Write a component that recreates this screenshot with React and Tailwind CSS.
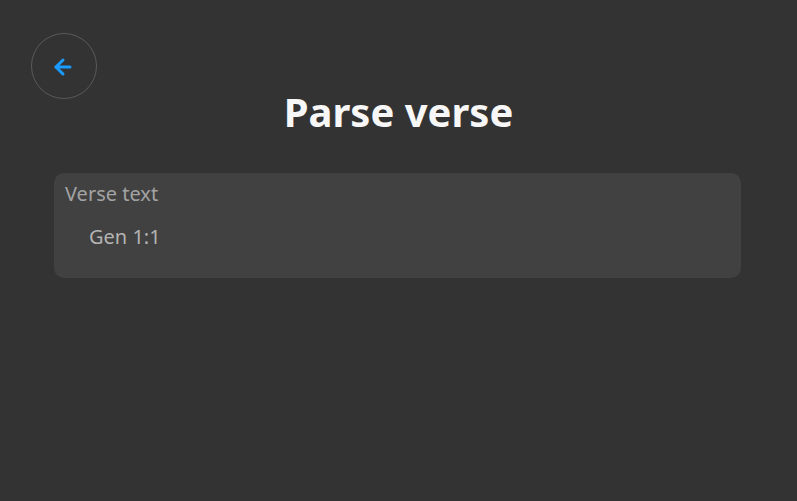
import { ArrowLeft } from "lucide-react"

export default function App() {
  return (
    <div className="w-[797px] h-[501px] bg-[#333333] font-['Noto_Sans',sans-serif] relative">
      <div className="px-[31px] pt-[33px]">
        <button className="w-[66px] h-[66px] rounded-full border border-[#5a5a5a] flex items-center justify-center">
          <ArrowLeft size={24} strokeWidth={3} color="#1a9cff" className="-ml-[2px] mt-[1px]" />
        </button>
      </div>
      <h1 className="text-center text-[40px] font-bold text-[#f7f7f7] leading-none -mt-[7px]">
        Parse verse
      </h1>
      <div className="ml-[54px] mr-[56px] mt-[41px] h-[105px] rounded-[10px] bg-[#414141] px-[11px] pt-[9px]">
        <div className="text-[20px] text-[#a3a3a3] leading-[24px]">Verse text</div>
        <div className="text-[20px] text-[#b3b3b3] leading-[24px] pl-[24px] mt-[19px]">Gen 1:1</div>
      </div>
    </div>
  )
}
